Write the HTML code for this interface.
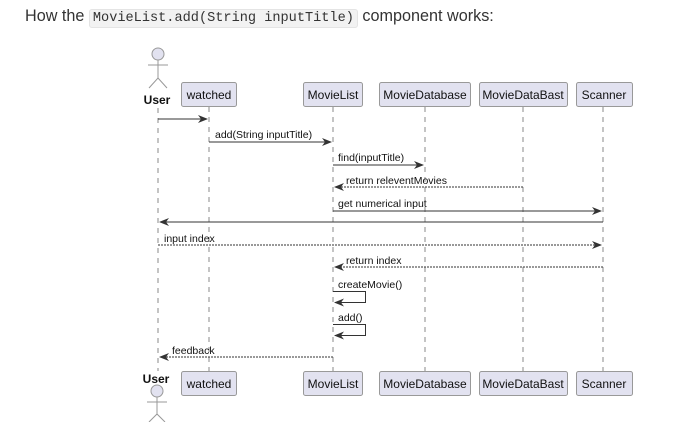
<!DOCTYPE html>
<html><head><meta charset="utf-8"><style>
html,body{margin:0;padding:0;background:#fff;width:695px;height:422px;overflow:hidden;}
.t{position:absolute;left:25px;top:7px;font-family:"Liberation Sans",sans-serif;font-size:16.2px;color:#333;white-space:nowrap;}
code{font-family:"Liberation Mono",monospace;font-size:13.6px;background:#f2f2f2;border:1px solid #e4e4e4;border-radius:3px;padding:1px 3px;color:#333;}
svg{position:absolute;left:0;top:0;}
</style></head><body>
<div class="t">How the <code>MovieList.add(String inputTitle)</code> component works:</div>
<svg width="695" height="422" font-family="Liberation Sans, sans-serif">
<g stroke="#888" stroke-dasharray="5,5" stroke-width="1">
<line x1="158" y1="108" x2="158" y2="371"/>
<line x1="209" y1="107" x2="209" y2="371"/>
<line x1="333" y1="107" x2="333" y2="371"/>
<line x1="425" y1="107" x2="425" y2="371"/>
<line x1="523" y1="107" x2="523" y2="371"/>
<line x1="603" y1="107" x2="603" y2="371"/>
</g>
<g fill="#e2e2f0" stroke="#999" stroke-width="1">
<rect x="181.5" y="82.5" width="55" height="24" rx="2"/>
<rect x="303.5" y="82.5" width="59" height="24" rx="2"/>
<rect x="379.5" y="82.5" width="91" height="24" rx="2"/>
<rect x="479.5" y="82.5" width="88" height="24" rx="2"/>
<rect x="576.5" y="82.5" width="56" height="24" rx="2"/>
<rect x="181.5" y="371.5" width="55" height="24" rx="2"/>
<rect x="303.5" y="371.5" width="59" height="24" rx="2"/>
<rect x="379.5" y="371.5" width="91" height="24" rx="2"/>
<rect x="479.5" y="371.5" width="88" height="24" rx="2"/>
<rect x="576.5" y="371.5" width="56" height="24" rx="2"/>
<circle cx="158" cy="54" r="6"/>
<circle cx="157" cy="391" r="6"/>
</g>
<g stroke="#999" fill="none">
<path d="M158 60V78M148 65H168M149 88L158 78L167 88"/>
<path d="M157 397V415M147 402H167M149 422L157 414L165 422"/>
</g>
<g font-size="12" fill="#111" text-anchor="middle">
<text x="209" y="99">watched</text><text x="333" y="99">MovieList</text><text x="425" y="99">MovieDatabase</text><text x="523" y="99">MovieDataBast</text><text x="604" y="99">Scanner</text>
<text x="209" y="388">watched</text><text x="333" y="388">MovieList</text><text x="425" y="388">MovieDatabase</text><text x="523" y="388">MovieDataBast</text><text x="604" y="388">Scanner</text>
<text x="157" y="104" font-weight="bold">User</text><text x="156" y="383" font-weight="bold">User</text>
</g>
<g stroke="#333" fill="none" stroke-width="1">
<line x1="158" y1="119" x2="207" y2="119"/>
<line x1="209" y1="142" x2="331" y2="142"/>
<line x1="333" y1="165" x2="423" y2="165"/>
<line x1="523" y1="187" x2="335" y2="187" stroke-dasharray="2,1"/>
<line x1="333" y1="211" x2="601" y2="211"/>
<line x1="603" y1="222" x2="160" y2="222"/>
<line x1="158" y1="245" x2="601" y2="245" stroke-dasharray="2,1"/>
<line x1="603" y1="267" x2="335" y2="267" stroke-dasharray="2,1"/>
<path d="M333 291.5H365.5V302.5H335"/>
<path d="M333 324.5H365.5V335.5H335"/>
<line x1="333" y1="357" x2="160" y2="357" stroke-dasharray="2,1"/>
</g>
<g fill="#333">
<path d="M208 119l-10-4 3 4-3 4z"/>
<path d="M332 142l-10-4 3 4-3 4z"/>
<path d="M424 165l-10-4 3 4-3 4z"/>
<path d="M334 187l10-4-3 4 3 4z"/>
<path d="M602 211l-10-4 3 4-3 4z"/>
<path d="M159 222l10-4-3 4 3 4z"/>
<path d="M602 245l-10-4 3 4-3 4z"/>
<path d="M334 267l10-4-3 4 3 4z"/>
<path d="M334 302.5l10-4-3 4 3 4z"/>
<path d="M334 335.5l10-4-3 4 3 4z"/>
<path d="M159 357l10-4-3 4 3 4z"/>
</g>
<g font-size="10.5" fill="#111">
<text x="215" y="138">add(String inputTitle)</text>
<text x="338" y="161">find(inputTitle)</text>
<text x="346" y="184">return releventMovies</text>
<text x="338" y="207">get numerical input</text>
<text x="164" y="242">input index</text>
<text x="346" y="264">return index</text>
<text x="338" y="288">createMovie()</text>
<text x="338" y="321">add()</text>
<text x="172" y="354">feedback</text>
</g>
</svg>
</body></html>
